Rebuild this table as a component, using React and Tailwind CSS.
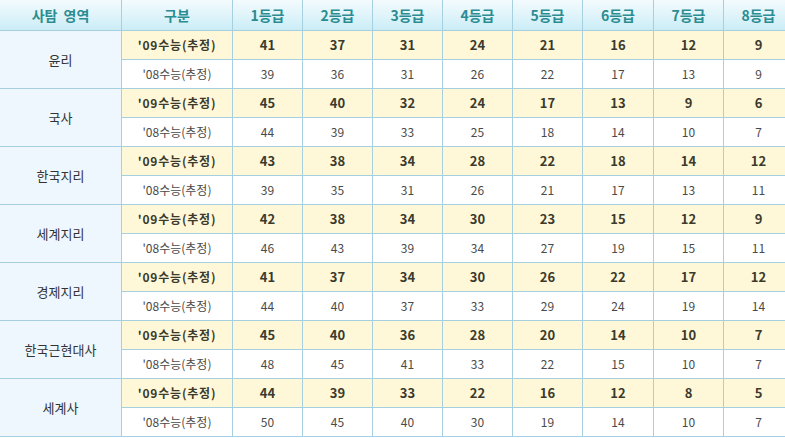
import React from 'react';

const grades = ['1등급', '2등급', '3등급', '4등급', '5등급', '6등급', '7등급', '8등급'];

const subjects = [
  { name: '윤리', y09: [41, 37, 31, 24, 21, 16, 12, 9], y08: [39, 36, 31, 26, 22, 17, 13, 9] },
  { name: '국사', y09: [45, 40, 32, 24, 17, 13, 9, 6], y08: [44, 39, 33, 25, 18, 14, 10, 7] },
  { name: '한국지리', y09: [43, 38, 34, 28, 22, 18, 14, 12], y08: [39, 35, 31, 26, 21, 17, 13, 11] },
  { name: '세계지리', y09: [42, 38, 34, 30, 23, 15, 12, 9], y08: [46, 43, 39, 34, 27, 19, 15, 11] },
  { name: '경제지리', y09: [41, 37, 34, 30, 26, 22, 17, 12], y08: [44, 40, 37, 33, 29, 24, 19, 14] },
  { name: '한국근현대사', y09: [45, 40, 36, 28, 20, 14, 10, 7], y08: [48, 45, 41, 33, 22, 15, 10, 7] },
  { name: '세계사', y09: [44, 39, 33, 22, 16, 12, 8, 5], y08: [50, 45, 40, 30, 19, 14, 10, 7] },
];

const font = { fontFamily: '"Noto Sans CJK KR", "Noto Sans", sans-serif' };

export default function App() {
  return (
    <div className="w-[785px] h-[438px] overflow-hidden bg-white" style={font}>
      <div className="grid w-[793px] grid-cols-[122px_111px_70px_70px_70px_70px_70px_71px_70px_70px] grid-rows-[31px_repeat(14,29px)]">
        {/* Header */}
        <div className="flex items-center justify-center gap-[6px] border-r border-b border-[#a6cfe0] bg-gradient-to-b from-[#f4fbfe] to-[#cbedf6] text-[14px] font-bold text-[#2b8c92]">
          <span>사탐</span>
          <span>영역</span>
        </div>
        <div className="flex items-center justify-center border-r border-b border-[#a6cfe0] bg-gradient-to-b from-[#f4fbfe] to-[#cbedf6] text-[14px] font-bold text-[#2b8c92]">
          구분
        </div>
        {grades.map((g) => (
          <div
            key={g}
            className="flex items-center justify-center border-r border-b border-[#a6cfe0] bg-gradient-to-b from-[#f4fbfe] to-[#cbedf6] text-[14px] font-bold text-[#2b8c92]"
          >
            {g}
          </div>
        ))}

        {/* Body */}
        {subjects.map((s) => (
          <React.Fragment key={s.name}>
            <div className="row-span-2 flex items-center justify-center border-r border-b border-[#a6cfe0] bg-[#eef7fd] text-[13px] text-[#333]">
              {s.name}
            </div>
            <div className="flex items-center justify-center border-r border-b border-[#a6cfe0] bg-[#fef8d8] text-[12px] font-bold tracking-[0.8px] text-[#3b3a2c]">
              '09수능(추정)
            </div>
            {s.y09.map((v, i) => (
              <div
                key={'a' + i}
                className="flex items-center justify-center border-r border-b border-[#a6cfe0] bg-[#fef8d8] text-[13px] font-bold text-[#3b3a2c]"
              >
                {v}
              </div>
            ))}
            <div className="col-start-2 flex items-center justify-center border-r border-b border-[#a6cfe0] bg-white text-[12px] text-[#4a4a4a]">
              '08수능(추정)
            </div>
            {s.y08.map((v, i) => (
              <div
                key={'b' + i}
                className="flex items-center justify-center border-r border-b border-[#a6cfe0] bg-white text-[12px] text-[#4a4a4a]"
              >
                {v}
              </div>
            ))}
          </React.Fragment>
        ))}
      </div>
    </div>
  );
}
